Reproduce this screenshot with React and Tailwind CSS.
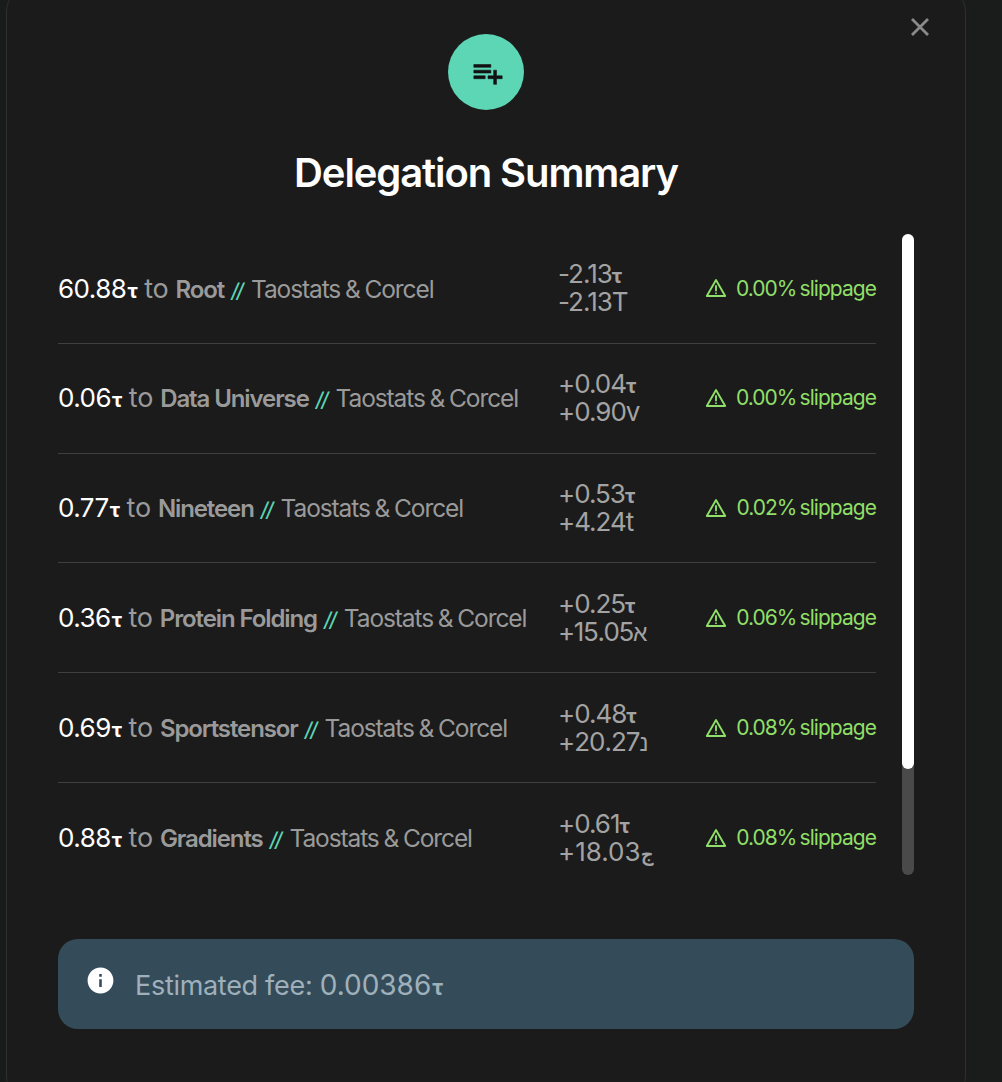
const rows = [
  { amount: '60.88', name: 'Root', a: '-2.13', b: '-2.13', bClass: '', unit: 'T', unitClass: '', slip: '0.00%' },
  { amount: '0.06', name: 'Data Universe', a: '+0.04', b: '+0.90', bClass: '', unit: 'v', unitClass: '', slip: '0.00%' },
  { amount: '0.77', name: 'Nineteen', a: '+0.53', b: '+4.24', bClass: '', unit: 't', unitClass: '', slip: '0.02%' },
  { amount: '0.36', name: 'Protein Folding', a: '+0.25', b: '+15.05', bClass: 'tracking-[-1.4px]', unit: 'א', unitClass: 'text-[23px] font-medium', slip: '0.06%' },
  { amount: '0.69', name: 'Sportstensor', a: '+0.48', b: '+20.27', bClass: '', unit: 'נ', unitClass: 'text-[23px] font-medium', slip: '0.08%' },
  { amount: '0.88', name: 'Gradients', a: '+0.61', b: '+18.03', bClass: 'tracking-[-2px]', unit: 'ج', unitClass: 'text-[19px] font-semibold', slip: '0.08%' },
];

const Warning = () => (
  <svg viewBox="0 0 22 22" className="w-[22px] h-[22px] shrink-0 fill-none stroke-[#8fdf68] stroke-[1.9]" strokeLinejoin="round" strokeLinecap="round">
    <path d="M11 3 20.2 19H1.8L11 3Z" />
    <path d="M11 9v4.5M11 16.2v.1" />
  </svg>
);

const Row = ({ row, last }) => (
  <div className={`flex items-center h-[109.8px] shrink-0 ${last ? '' : 'border-b border-[#3f3f3f]'}`}>
    <div className="w-[501px] shrink-0 pt-[1px] text-[24.5px] tracking-[-1.1px] [word-spacing:-1px] text-[#9a9a9a] whitespace-nowrap">
      <span className="text-[26px] tracking-[-0.5px] text-white">{row.amount}<b className="ml-[1px] text-[20px] leading-none font-bold">τ</b></span>
      <span className="mx-[7px] text-[27px] tracking-[-0.2px]">to</span>
      <span className="text-[24px] tracking-[-1.1px] [word-spacing:0px] font-semibold">{row.name}</span>
      <span className="ml-[7px] mr-[9px] text-[20px] tracking-[-2px] font-medium text-[#5cd6b5] italic">//</span>
      <span>Taostats &amp; Corcel</span>
    </div>
    <div className="-ml-[1px] text-[26px] leading-[28px] tracking-[-1px] text-[#a3a3a3] whitespace-nowrap">
      <div>{row.a}<b className="text-[20px] leading-none font-bold">τ</b></div>
      <div><span className={row.bClass}>{row.b}</span><span className={`leading-none ${row.unitClass}`}>{row.unit}</span></div>
    </div>
    <div className="ml-auto flex items-center gap-[9px] text-[21px] tracking-[-0.95px] [word-spacing:-2px] text-[#8fdf68] whitespace-nowrap">
      <Warning />
      <span>{row.slip} slippage</span>
    </div>
  </div>
);

export default function App() {
  return (
    <div className="h-[1082px] overflow-hidden bg-[#1a1c1c] font-['Inter',sans-serif]">
      <div className="relative ml-[6px] mt-[-16px] w-[960px] h-[1120px] rounded-[28px] border border-[#2e2f2f] bg-[#1b1b1b] pt-[49px]">
        <button className="absolute right-[35px] top-[32px] text-[#8a8a8a]">
          <svg viewBox="0 0 20 20" className="w-[20px] h-[20px] stroke-current" strokeWidth="2.8" fill="none">
            <path d="M2 2 18 18M18 2 2 18" />
          </svg>
        </button>

        <div className="mx-auto flex h-[76px] w-[76px] items-center justify-center rounded-full bg-[#5cd6b5]">
          <svg viewBox="0 0 24 24" className="ml-[3px] mt-[1px] w-[34px] h-[34px] fill-[#111] stroke-[#111] stroke-[0.4]">
            <path d="M14 10H2v2h12v-2zm0-4H2v2h12V6zm4 8v-4h-2v4h-4v2h4v4h2v-4h4v-2h-4zM2 16h8v-2H2v2z" />
          </svg>
        </div>

        <h2 className="mt-[38px] text-center text-[40px] leading-[50px] font-semibold tracking-[-1.1px] text-white">
          Delegation Summary
        </h2>

        <div className="mt-[36px] ml-[51px] mr-[51px] flex h-[641px] gap-[26px] overflow-hidden">
          <div className="flex w-[818px] shrink-0 flex-col">
            {rows.map((row, i) => (
              <Row key={row.name} row={row} last={i === rows.length - 1} />
            ))}
          </div>
          <div className="w-[12px] shrink-0 rounded-full bg-[#4a4a4a]">
            <div className="h-[535px] rounded-full bg-white" />
          </div>
        </div>

        <div className="mx-[51px] mt-[64px] flex h-[90px] items-start rounded-[20px] bg-[#344c5a] pl-[27px] pt-[28px]">
          <svg viewBox="0 0 24 24" className="w-[31px] h-[31px] shrink-0 -mt-[2px] fill-white">
            <path d="M12 2C6.48 2 2 6.48 2 12s4.48 10 10 10 10-4.48 10-10S17.52 2 12 2zm1 15h-2v-6h2v6zm0-8h-2V7h2v2z" />
          </svg>
          <span className="ml-[19px] text-[27px] leading-[36px] tracking-[-0.3px] text-[#9fb0ba]">
            Estimated fee: <span className="text-[28px] tracking-[0px]">0.00386</span><b className="ml-[1px] text-[21px] leading-none font-bold">τ</b>
          </span>
        </div>
      </div>
    </div>
  );
}
